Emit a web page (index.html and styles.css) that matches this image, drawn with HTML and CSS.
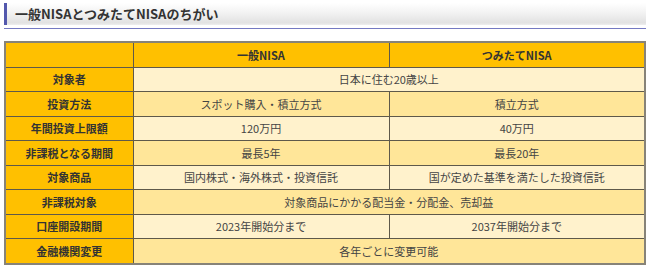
FILE: index.html
```html
<!DOCTYPE html>
<html lang="ja">
<head>
<meta charset="utf-8">
<title>一般NISAとつみたてNISAのちがい</title>
<link rel="stylesheet" href="styles.css">
</head>
<body>
<div class="page">
  <h2 class="heading">一般NISAとつみたてNISAのちがい</h2>
  <div class="rule"></div>
  <table class="cmp">
    <colgroup><col class="c1"><col class="c2"><col class="c3"></colgroup>
    <thead>
      <tr><th></th><th>一般NISA</th><th>つみたてNISA</th></tr>
    </thead>
    <tbody>
      <tr class="lt"><th>対象者</th><td colspan="2">日本に住む20歳以上</td></tr>
      <tr class="dk"><th>投資方法</th><td>スポット購入・積立方式</td><td>積立方式</td></tr>
      <tr class="lt"><th>年間投資上限額</th><td>120万円</td><td>40万円</td></tr>
      <tr class="dk"><th>非課税となる期間</th><td>最長5年</td><td>最長20年</td></tr>
      <tr class="lt"><th>対象商品</th><td>国内株式・海外株式・投資信託</td><td>国が定めた基準を満たした投資信託</td></tr>
      <tr class="dk"><th>非課税対象</th><td colspan="2">対象商品にかかる配当金・分配金、売却益</td></tr>
      <tr class="lt"><th>口座開設期間</th><td>2023年開始分まで</td><td>2037年開始分まで</td></tr>
      <tr class="dk"><th>金融機関変更</th><td colspan="2">各年ごとに変更可能</td></tr>
    </tbody>
  </table>
</div>
</body>
</html>
```

FILE: styles.css
```css
html, body {
  margin: 0;
  padding: 0;
  background: #fff;
}
body {
  font-family: "Noto Sans CJK JP", "Noto Sans", sans-serif;
  color: #333;
}
.page {
  padding: 3px 4px 0 4px;
}
.heading {
  margin: 0;
  height: 22px;
  line-height: 22px;
  font-size: 13px;
  font-weight: bold;
  color: #333;
  padding-left: 8px;
  border-left: 3px solid #5358ad;
  background: linear-gradient(to bottom, #ffffff 0%, #f2f2f2 45%, #e2e2e2 90%, #eeeeee 100%);
}
.rule {
  margin-top: 3px;
  height: 1px;
  background: #7479c2;
}
.cmp {
  margin-top: 12px;
  width: 642px;
  border-collapse: collapse;
  table-layout: fixed;
  border: 2px solid #878378;
  font-size: 11px;
}
.c1 { width: 20%; }
.c2 { width: 40%; }
.c3 { width: 40%; }
.cmp th,
.cmp td {
  border: 1px solid #5e594a;
  height: 23.5px;
  padding: 0 4px;
  text-align: center;
  vertical-align: middle;
}
.cmp thead th {
  background: #ffc000;
  font-weight: bold;
  color: #333;
}
.cmp tbody th {
  background: #ffc000;
  font-weight: bold;
  color: #333;
}
.cmp td {
  color: #444;
  font-weight: normal;
}
.lt td { background: #fff2cc; }
.dk td { background: #ffe699; }
```
